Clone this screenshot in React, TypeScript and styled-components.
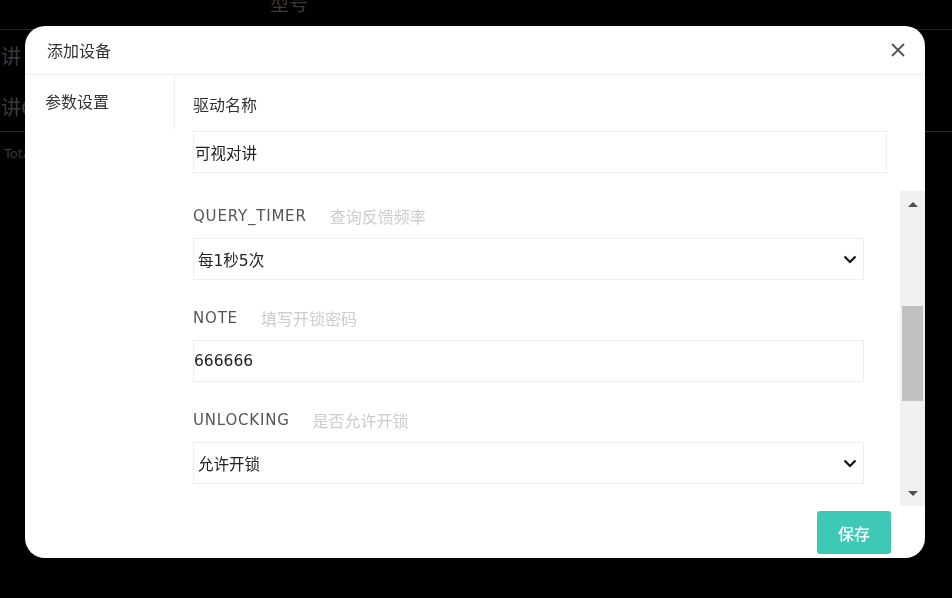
import styled, { createGlobalStyle } from 'styled-components';

const GlobalStyle = createGlobalStyle`
  html, body {
    margin: 0;
    padding: 0;
    background: #000;
    font-family: "DejaVu Sans", "Noto Sans CJK SC", sans-serif;
  }
  * { box-sizing: border-box; }
`;

const Page = styled.div`
  width: 952px;
  height: 598px;
  overflow: hidden;
  background: #000;
  color: #3a3a3a;
`;
const HeadRow = styled.div`
  height: 30px;
  border-bottom: 1px solid #262626;
  padding-left: 270px;
  font-size: 19px;
  line-height: 1;
  font-family: "Noto Sans CJK SC", sans-serif;
  overflow: hidden;
`;
const HeadCell = styled.span`
  display: block;
  margin-top: -7px;
`;
const BgRow = styled.div<{ $last?: boolean }>`
  height: 51px;
  display: flex;
  align-items: center;
  font-size: 20px;
  border-bottom: ${(p) => (p.$last ? '1px solid #262626' : 'none')};
  overflow: hidden;
`;
const BgCell = styled.span`
  margin-left: -19px;
  white-space: nowrap;
`;
const BgFooter = styled.div`
  padding: 14px 0 0 4px;
  font-size: 13px;
`;

const Modal = styled.div`
  position: fixed;
  left: 25px;
  top: 26px;
  width: 900px;
  height: 532px;
  background: #fff;
  border-radius: 20px;
  display: flex;
  flex-direction: column;
  overflow: hidden;
`;
const Header = styled.div`
  height: 49px;
  flex: none;
  border-bottom: 1px solid #eee;
  display: flex;
  align-items: center;
  justify-content: space-between;
  padding: 0 20px 0 22px;
`;
const Title = styled.span`
  font-family: "Noto Sans CJK SC", sans-serif;
  font-size: 16px;
  color: #333;
`;
const CloseButton = styled.button`
  width: 14px;
  height: 14px;
  padding: 0;
  border: 0;
  background: none;
  display: flex;
  cursor: pointer;
`;
const Body = styled.div`
  flex: 1;
  min-height: 0;
  display: flex;
`;
const Sidebar = styled.div`
  width: 150px;
  flex: none;
`;
const SideItem = styled.div`
  height: 54px;
  border-right: 1px solid #eee;
  padding: 15px 0 0 20px;
  font-family: "Noto Sans CJK SC", sans-serif;
  font-size: 16px;
  line-height: 22px;
  color: #333;
`;
const Main = styled.div`
  flex: 1;
  min-width: 0;
  display: flex;
  flex-direction: column;
  padding-left: 18px;
`;
const TopField = styled.div`
  padding: 18px 38px 0 0;
`;
const Label = styled.div<{ $gap: number }>`
  display: flex;
  align-items: center;
  height: 22px;
  margin-bottom: ${(p) => p.$gap}px;
  font-size: 15px;
  color: #555;
  letter-spacing: 0.8px;
`;
const CnLabel = styled.span`
  font-family: "Noto Sans CJK SC", sans-serif;
  font-size: 16px;
  letter-spacing: 0;
  color: #333;
`;
const Hint = styled.span`
  margin-left: 23px;
  font-family: "Noto Sans CJK SC", sans-serif;
  font-size: 16px;
  letter-spacing: 0;
  color: #ccc;
`;
const Input = styled.div<{ $pad: number }>`
  height: 42px;
  border: 1px solid #eee;
  display: flex;
  align-items: center;
  justify-content: space-between;
  padding: 0 6px 0 ${(p) => p.$pad}px;
  font-size: 15.5px;
  color: #222;
`;
const ScrollArea = styled.div`
  margin-top: 18px;
  height: 315px;
  display: flex;
`;
const ScrollContent = styled.div`
  flex: 1;
  min-width: 0;
  overflow: hidden;
  padding: 14px 36px 0 0;
`;
const Field = styled.div`
  margin-bottom: 27px;
`;
const Track = styled.div`
  width: 25px;
  flex: none;
  background: #f1f1f1;
  display: flex;
  flex-direction: column;
`;
const Arrow = styled.div<{ $down?: boolean }>`
  height: 26px;
  flex: none;
  display: flex;
  align-items: center;
  justify-content: center;
  &::before {
    content: '';
    border-left: 5px solid transparent;
    border-right: 5px solid transparent;
    ${(p) => (p.$down ? 'border-top: 5px solid #505050;' : 'border-bottom: 5px solid #505050;')}
  }
`;
const Rail = styled.div`
  flex: 1;
  padding: 89px 2px 0;
`;
const Thumb = styled.div`
  height: 95px;
  background: #c1c1c1;
`;
const Footer = styled.div`
  height: 52px;
  flex: none;
  display: flex;
  justify-content: flex-end;
  padding: 5px 34px 0 0;
`;
const SaveButton = styled.button`
  width: 74px;
  height: 43px;
  border: 0;
  border-radius: 3px;
  background: #3ec9b7;
  color: #fff;
  font-family: "Noto Sans CJK SC", sans-serif;
  font-size: 16px;
  font-weight: 500;
  cursor: pointer;
`;

const Chevron = () => (
  <svg width="14" height="9" viewBox="0 0 14 9" fill="none">
    <path d="M1.5 1.5 L7 7 L12.5 1.5" stroke="#111" strokeWidth="2.2" />
  </svg>
);

const fields = [
  { key: 'QUERY_TIMER', hint: '查询反馈频率', value: '每1秒5次', select: true },
  { key: 'NOTE', hint: '填写开锁密码', value: '666666', select: false },
  { key: 'UNLOCKING', hint: '是否允许开锁', value: '允许开锁', select: true },
];

export default function App() {
  return (
    <>
      <GlobalStyle />
      <Page>
        <HeadRow>
          <HeadCell>型号</HeadCell>
        </HeadRow>
        <BgRow>
          <BgCell>对讲</BgCell>
        </BgRow>
        <BgRow $last>
          <BgCell>对讲GH</BgCell>
        </BgRow>
        <BgFooter>Total 2</BgFooter>
      </Page>
      <Modal>
        <Header>
          <Title>添加设备</Title>
          <CloseButton aria-label="close">
            <svg width="14" height="14" viewBox="0 0 14 14">
              <path d="M1 1 L13 13 M13 1 L1 13" stroke="#555" strokeWidth="1.8" />
            </svg>
          </CloseButton>
        </Header>
        <Body>
          <Sidebar>
            <SideItem>参数设置</SideItem>
          </Sidebar>
          <Main>
            <TopField>
              <Label $gap={16}>
                <CnLabel>驱动名称</CnLabel>
              </Label>
              <Input $pad={1}>可视对讲</Input>
            </TopField>
            <ScrollArea>
              <ScrollContent>
                {fields.map((f) => (
                  <Field key={f.key}>
                    <Label $gap={11}>
                      {f.key}
                      <Hint>{f.hint}</Hint>
                    </Label>
                    <Input $pad={f.select ? 4 : 0}>
                      {f.value}
                      {f.select && <Chevron />}
                    </Input>
                  </Field>
                ))}
              </ScrollContent>
              <Track>
                <Arrow />
                <Rail>
                  <Thumb />
                </Rail>
                <Arrow $down />
              </Track>
            </ScrollArea>
            <Footer>
              <SaveButton>保存</SaveButton>
            </Footer>
          </Main>
        </Body>
      </Modal>
    </>
  );
}
